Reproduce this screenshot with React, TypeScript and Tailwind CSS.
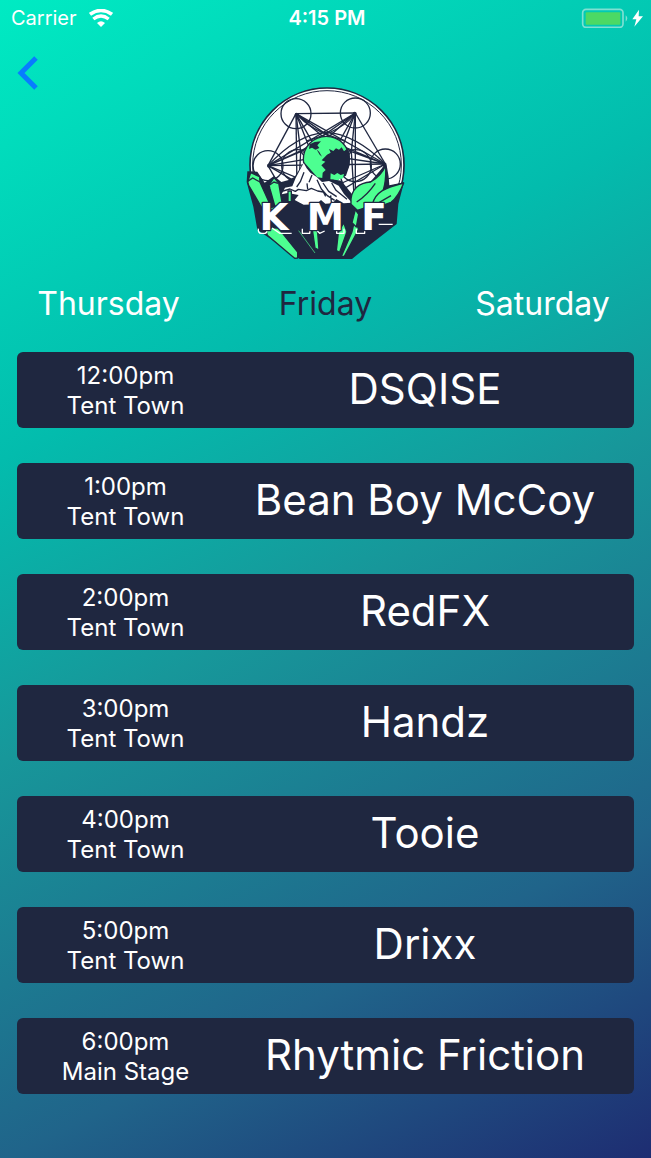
import React, { useState } from "react";

type Slot = { time: string; stage: string; artist: string };

const days = ["Thursday", "Friday", "Saturday"];

const slots: Slot[] = [
  { time: "12:00pm", stage: "Tent Town", artist: "DSQISE" },
  { time: "1:00pm", stage: "Tent Town", artist: "Bean Boy McCoy" },
  { time: "2:00pm", stage: "Tent Town", artist: "RedFX" },
  { time: "3:00pm", stage: "Tent Town", artist: "Handz" },
  { time: "4:00pm", stage: "Tent Town", artist: "Tooie" },
  { time: "5:00pm", stage: "Tent Town", artist: "Drixx" },
  { time: "6:00pm", stage: "Main Stage", artist: "Rhytmic Friction" },
];

function WifiIcon() {
  return (
    <svg viewBox="0 0 72 54" className="h-[18px] w-6" fill="none" stroke="white" aria-hidden="true">
      <path d="M3 16 Q36 -7 69 16" strokeWidth="11" />
      <path d="M13 30 Q36 12 59 30" strokeWidth="10" />
      <path d="M24 42 Q36 31 48 42 L36 54 Z" fill="white" stroke="none" />
    </svg>
  );
}

function BatteryIcon() {
  return (
    <svg viewBox="0 0 186 60" className="h-5 w-[62px]" aria-hidden="true">
      <rect x="5" y="4" width="121" height="54" rx="10" fill="none" stroke="#7fe0d2" strokeWidth="5" />
      <rect x="14" y="13" width="104" height="37" rx="3" fill="#4cd964" />
      <path d="M134 22 q10 9 0 19 z" fill="#7fe0d2" />
      <path d="M174 5 L154 34 H166 L160 56 L186 25 H173 Z" fill="white" />
    </svg>
  );
}

function Logo() {
  const nodes = [
    [182, 101],
    [360, 99],
    [98, 257],
    [450, 252],
    [186, 410],
    [360, 410],
  ];
  return (
    <svg viewBox="29 18 486 528" className="h-44 w-[162px]" role="img" aria-label="KMF">
      <circle cx="275" cy="255" r="231" fill="white" stroke="#1f2740" strokeWidth="5" />
      <circle cx="275" cy="255" r="223" fill="none" stroke="#1f2740" strokeWidth="3" />
      <g fill="none" stroke="#1f2740" strokeWidth="4">
        {nodes.map(([x, y], i) => (
          <g key={i}>
            <circle cx={x} cy={y} r="45" />
            {nodes.slice(i + 1).map(([a, b], j) => (
              <path key={j} d={`M${x} ${y} L${a} ${b}`} />
            ))}
            <path d={`M${x} ${y} L272 178 M${x} ${y} L196 215 M${x} ${y} L348 215 M${x} ${y} L272 330`} />
          </g>
        ))}
        <circle cx="187" cy="257" r="48" />
        <circle cx="360" cy="257" r="48" />
        <path d="M98 257 Q185 162 272 157 Q360 162 450 252" />
        <path d="M186 101 Q215 148 330 183 M360 99 Q330 148 214 183" />
      </g>
      <g fill="#1f2740">
        <circle cx="184" cy="104" r="6" />
        <circle cx="358" cy="101" r="6" />
        <circle cx="101" cy="257" r="6" />
        <circle cx="446" cy="253" r="6" />
      </g>

      <circle cx="273" cy="238" r="69" fill="#4dff91" stroke="#1f2740" strokeWidth="4" />
      <g fill="#1f2740">
        <path d="M223 193 L238 186 L257 184 L246 196 L252 204 L240 209 L230 203 L221 207 Z" />
        <path d="M243 207 L252 216 L260 230 L253 224 Z" />
        <path d="M275 224 L286 218 L281 207 L294 213 L302 205 L311 209 L319 202 L326 214 L335 206 L343 228 L343 255 L332 287 L315 296 L303 283 L292 303 L260 303 L262 278 L271 270 L258 256 L270 245 L259 241 Z" />
      </g>
      <path d="M286 280 l11 5 l9 -6 l10 6 l10 -3 l-3 13 l-12 3 l-5 8 l-9 -8 l-12 3 z" fill="#4dff91" />

      <path d="M36 274 L66 275 L88 308 L116 288 L138 306 L160 300 L178 290 L206 246 L246 292 L318 302 L352 345 L372 318 L408 302 L453 250 L460 290 L462 316 L506 307 L489 372 L484 432 L372 519 L350 537 H193 L66 449 L54 380 L34 306 Z" fill="#1f2740" />
      <path d="M205 249 L214 265 L225 278 L244 291 L260 306 L281 303 L310 317 L326 342 L350 368 L325 370 L303 357 L292 370 L270 371 L257 360 L243 373 L205 374 L178 360 L190 345 L157 339 L139 343 L149 323 L171 319 L181 294 Z" fill="white" />
      <path d="M143 333 L164 327 L180 334 L189 328 L213 332 L228 325 L247 333 L264 336 L271 349 M206 277 L195 305 L184 321 M230 285 L221 307 M245 299 L258 327 L276 347 L298 361 M263 309 L280 334 L304 350 M289 309 L302 331 L335 358 M286 346 L288 366 M215 310 L217 327" fill="none" stroke="#1f2740" strokeWidth="4" strokeLinejoin="bevel" />

      <g fill="#4dff91" stroke="#1f2740" strokeWidth="4" strokeLinejoin="round">
        <path d="M37 305 L46 278 L73 290 L74 307 L108 382 L80 384 L40 316 Z" />
        <path d="M101 315 L116 293 L130 309 L141 373 L120 384 L104 327 Z" />
        <path d="M158 333 H168 V365 H158 Z" />
        <path d="M103 384 L126 377 L124 391 L111 394 Z" />
        <path d="M347 373 C343 324 376 308 406 306 Q437 288 451 257 Q454 327 430 356 Q402 381 366 391 Z" />
        <path d="M411 373 C421 335 450 323 505 309 Q489 350 467 367 Q443 379 414 375 Z" />
        <path d="M91 443 L129 444 L187 516 V534 L178 535 L96 466 Z" />
        <path d="M226 414 L247 458 L251 510 L239 504 Z" />
        <path d="M325 428 L335 455 L313 517 L303 512 L309 458 Z" />
        <path d="M358 420 L370 448 L327 529 L318 529 L350 455 Z" />
        <path d="M360 389 L370 403 L363 441 L350 428 Z" />
      </g>
      <path d="M37 304 L52 294 L74 306 M103 315 L116 306 L128 310 M364 366 Q397 344 420 310 M432 367 L467 347" fill="none" stroke="#1f2740" strokeWidth="4" />
      <path d="M190 452 L239 519" stroke="#4dff91" strokeWidth="2" />

      <g fill="none" stroke="white" strokeWidth="4" strokeLinejoin="round">
        <path d="M69 446 Q68 460 77 460 H88 Q96 460 95 446 M110 444 L134 460 H169" />
        <path d="M201 446 V460 H223 L225 446 M235 443 L253 460 L268 453 M304 446 V460 H326 V446" />
        <path d="M363 446 V460 H388 V446 M430 433 H472" />
      </g>
      <g
        fontFamily="'DejaVu Sans', sans-serif"
        fontWeight="700"
        fontSize="112"
        fill="white"
        stroke="#1f2740"
        strokeWidth="8"
        strokeLinejoin="round"
        paintOrder="stroke"
        textAnchor="middle"
      >
        <text x="116" y="450">K</text>
        <text x="270" y="450">M</text>
        <text x="416" y="450">F</text>
      </g>
    </svg>
  );
}

export default function App() {
  const [day, setDay] = useState("Friday");
  return (
    <div className="flex min-h-screen flex-col bg-[linear-gradient(153deg,#00ebc3_0%,#03bcad_31%,#17979a_51%,#20648a_78%,#1e2d72_100%)] pb-16 font-['Inter','Liberation_Sans',sans-serif] text-white">
      <header>
        <div className="grid h-9 grid-cols-3 items-center pl-[11px] pr-2 text-xl">
          <div className="flex items-center gap-3">
            <span>Carrier</span>
            <WifiIcon />
          </div>
          <div className="text-center font-semibold">4:15 PM</div>
          <div className="flex justify-end">
            <BatteryIcon />
          </div>
        </div>
        <div className="flex h-14 items-end px-4">
          <button type="button" aria-label="Back">
            <svg viewBox="0 0 24 36" className="h-9 w-6" fill="none" stroke="#087cff" strokeWidth="5" aria-hidden="true">
              <path d="M20 2 L5 17 L20 32" />
            </svg>
          </button>
        </div>
      </header>

      <div className="-mt-1.5 flex justify-center">
        <Logo />
      </div>

      <nav className="mt-[21px] flex">
        {days.map((d) => (
          <button
            key={d}
            type="button"
            aria-pressed={d === day}
            onClick={() => setDay(d)}
            className={
              d === day
                ? "flex-1 text-[32px] leading-[42px] text-[#1f2740]"
                : "flex-1 text-[32px] leading-[42px] text-white"
            }
          >
            {d}
          </button>
        ))}
      </nav>

      <ul className="mt-[27px] flex flex-col gap-[35px] px-[17px]">
        {slots.map((s) => (
          <li key={s.time} className="flex h-[76px] items-center rounded-md bg-[#1f2740] pr-[18px]">
            <div className="w-[217px] shrink-0 pt-0.5 text-center text-2xl leading-[30px]">
              <div>{s.time}</div>
              <div>{s.stage}</div>
            </div>
            <div className="flex-1 whitespace-nowrap pb-0.5 text-center text-[42px] leading-[52px]">{s.artist}</div>
          </li>
        ))}
      </ul>
    </div>
  );
}
